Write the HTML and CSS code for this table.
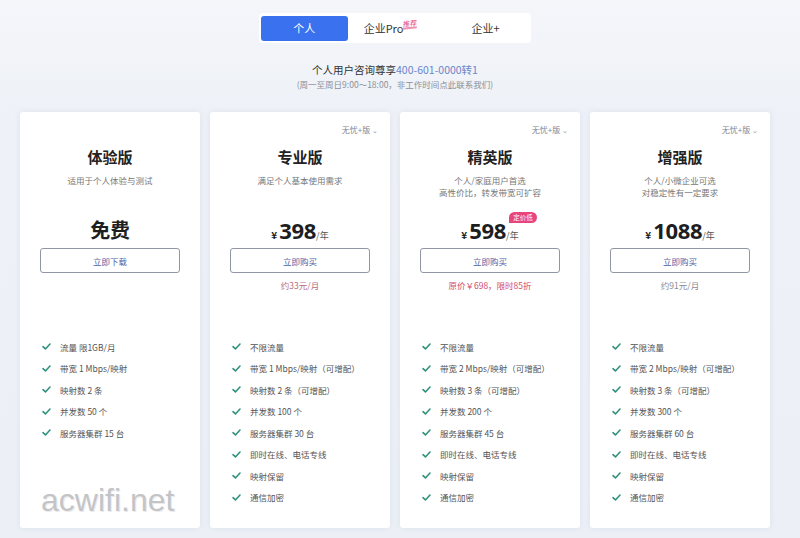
FILE: index.html
```html
<!DOCTYPE html>
<html lang="zh-CN">
<head>
<meta charset="utf-8">
<title>价格</title>
<link rel="stylesheet" href="styles.css">
</head>
<body>
<div class="page">
  <header class="head">
    <nav class="tabs">
      <span class="tab active">个人</span>
      <span class="tab pro">企业Pro<span class="hot">推荐</span></span>
      <span class="tab">企业+</span>
    </nav>
    <p class="consult">个人用户咨询尊享<span class="phone">400-601-0000转1</span></p>
    <p class="hours">(周一至周日9:00～18:00，非工作时间点此联系我们)</p>
  </header>

  <main class="cards">
    <section class="card">
      <div class="card-top"></div>
      <h2 class="title">体验版</h2>
      <div class="desc">适用于个人体验与测试</div>
      <div class="price-row"><span class="price free">免费</span></div>
      <button class="btn">立即下载</button>
      <div class="note">&nbsp;</div>
      <ul class="feats">
        <li><svg class="chk" viewBox="0 0 10 8"><path d="M1 4.2 L3.8 6.8 L9 1.2"/></svg>流量 限1GB/月</li>
        <li><svg class="chk" viewBox="0 0 10 8"><path d="M1 4.2 L3.8 6.8 L9 1.2"/></svg>带宽 1 Mbps/映射</li>
        <li><svg class="chk" viewBox="0 0 10 8"><path d="M1 4.2 L3.8 6.8 L9 1.2"/></svg>映射数 2 条</li>
        <li><svg class="chk" viewBox="0 0 10 8"><path d="M1 4.2 L3.8 6.8 L9 1.2"/></svg>并发数 50 个</li>
        <li><svg class="chk" viewBox="0 0 10 8"><path d="M1 4.2 L3.8 6.8 L9 1.2"/></svg>服务器集群 15 台</li>
      </ul>
    </section>

    <section class="card">
      <div class="card-top"><span class="ver">无忧+版 <i class="caret">⌄</i></span></div>
      <h2 class="title">专业版</h2>
      <div class="desc">满足个人基本使用需求</div>
      <div class="price-row"><span class="cur">¥</span><span class="price">398</span><span class="unit">/年</span></div>
      <button class="btn">立即购买</button>
      <div class="note pink">约33元/月</div>
      <ul class="feats">
        <li><svg class="chk" viewBox="0 0 10 8"><path d="M1 4.2 L3.8 6.8 L9 1.2"/></svg>不限流量</li>
        <li><svg class="chk" viewBox="0 0 10 8"><path d="M1 4.2 L3.8 6.8 L9 1.2"/></svg>带宽 1 Mbps/映射（可增配）</li>
        <li><svg class="chk" viewBox="0 0 10 8"><path d="M1 4.2 L3.8 6.8 L9 1.2"/></svg>映射数 2 条（可增配）</li>
        <li><svg class="chk" viewBox="0 0 10 8"><path d="M1 4.2 L3.8 6.8 L9 1.2"/></svg>并发数 100 个</li>
        <li><svg class="chk" viewBox="0 0 10 8"><path d="M1 4.2 L3.8 6.8 L9 1.2"/></svg>服务器集群 30 台</li>
        <li><svg class="chk" viewBox="0 0 10 8"><path d="M1 4.2 L3.8 6.8 L9 1.2"/></svg>即时在线、电话专线</li>
        <li><svg class="chk" viewBox="0 0 10 8"><path d="M1 4.2 L3.8 6.8 L9 1.2"/></svg>映射保留</li>
        <li><svg class="chk" viewBox="0 0 10 8"><path d="M1 4.2 L3.8 6.8 L9 1.2"/></svg>通信加密</li>
      </ul>
    </section>

    <section class="card">
      <div class="card-top"><span class="ver">无忧+版 <i class="caret">⌄</i></span></div>
      <h2 class="title">精英版</h2>
      <div class="desc">个人/家庭用户首选<br>高性价比，转发带宽可扩容</div>
      <div class="price-row"><span class="cur">¥</span><span class="price">598</span><span class="unit">/年</span><span class="tag">定价低</span></div>
      <button class="btn">立即购买</button>
      <div class="note red">原价￥698，限时85折</div>
      <ul class="feats">
        <li><svg class="chk" viewBox="0 0 10 8"><path d="M1 4.2 L3.8 6.8 L9 1.2"/></svg>不限流量</li>
        <li><svg class="chk" viewBox="0 0 10 8"><path d="M1 4.2 L3.8 6.8 L9 1.2"/></svg>带宽 2 Mbps/映射（可增配）</li>
        <li><svg class="chk" viewBox="0 0 10 8"><path d="M1 4.2 L3.8 6.8 L9 1.2"/></svg>映射数 3 条（可增配）</li>
        <li><svg class="chk" viewBox="0 0 10 8"><path d="M1 4.2 L3.8 6.8 L9 1.2"/></svg>并发数 200 个</li>
        <li><svg class="chk" viewBox="0 0 10 8"><path d="M1 4.2 L3.8 6.8 L9 1.2"/></svg>服务器集群 45 台</li>
        <li><svg class="chk" viewBox="0 0 10 8"><path d="M1 4.2 L3.8 6.8 L9 1.2"/></svg>即时在线、电话专线</li>
        <li><svg class="chk" viewBox="0 0 10 8"><path d="M1 4.2 L3.8 6.8 L9 1.2"/></svg>映射保留</li>
        <li><svg class="chk" viewBox="0 0 10 8"><path d="M1 4.2 L3.8 6.8 L9 1.2"/></svg>通信加密</li>
      </ul>
    </section>

    <section class="card">
      <div class="card-top"><span class="ver">无忧+版 <i class="caret">⌄</i></span></div>
      <h2 class="title">增强版</h2>
      <div class="desc">个人/小微企业可选<br>对稳定性有一定要求</div>
      <div class="price-row"><span class="cur">¥</span><span class="price">1088</span><span class="unit">/年</span></div>
      <button class="btn">立即购买</button>
      <div class="note grey">约91元/月</div>
      <ul class="feats">
        <li><svg class="chk" viewBox="0 0 10 8"><path d="M1 4.2 L3.8 6.8 L9 1.2"/></svg>不限流量</li>
        <li><svg class="chk" viewBox="0 0 10 8"><path d="M1 4.2 L3.8 6.8 L9 1.2"/></svg>带宽 2 Mbps/映射（可增配）</li>
        <li><svg class="chk" viewBox="0 0 10 8"><path d="M1 4.2 L3.8 6.8 L9 1.2"/></svg>映射数 3 条（可增配）</li>
        <li><svg class="chk" viewBox="0 0 10 8"><path d="M1 4.2 L3.8 6.8 L9 1.2"/></svg>并发数 300 个</li>
        <li><svg class="chk" viewBox="0 0 10 8"><path d="M1 4.2 L3.8 6.8 L9 1.2"/></svg>服务器集群 60 台</li>
        <li><svg class="chk" viewBox="0 0 10 8"><path d="M1 4.2 L3.8 6.8 L9 1.2"/></svg>即时在线、电话专线</li>
        <li><svg class="chk" viewBox="0 0 10 8"><path d="M1 4.2 L3.8 6.8 L9 1.2"/></svg>映射保留</li>
        <li><svg class="chk" viewBox="0 0 10 8"><path d="M1 4.2 L3.8 6.8 L9 1.2"/></svg>通信加密</li>
      </ul>
    </section>
  </main>
  <div class="watermark">acwifi.net</div>
</div>
</body>
</html>
```

FILE: styles.css
```css
* { box-sizing: border-box; }
html, body { margin: 0; padding: 0; }
body {
  width: 800px;
  height: 538px;
  overflow: hidden;
  background: linear-gradient(180deg, #f4f6fa 0px, #eef1f7 120px, #ecf0f6 100%);
  font-family: "Noto Sans CJK SC", "Noto Sans", sans-serif;
  color: #333;
}
.page { position: relative; width: 800px; height: 538px; }

.head {
  width: 750px;
  margin-left: 20px;
  padding-top: 13px;
  display: flex;
  flex-direction: column;
  align-items: center;
}
.tabs {
  width: 272px;
  height: 30px;
  background: #fff;
  border-radius: 4px;
  padding: 3px 2px;
  display: flex;
  align-items: center;
}
.tab {
  position: relative;
  width: 87px;
  height: 25px;
  display: flex;
  align-items: center;
  justify-content: center;
  font-size: 11px;
  color: #333;
}
.tab.pro {
  width: 95px;
  justify-content: flex-start;
  padding-left: 16px;
}
.tab.active {
  background: #3a71ef;
  color: #fff;
  border-radius: 3px;
}
.hot {
  position: absolute;
  left: 55px;
  top: 3px;
  font-size: 7px;
  line-height: 8px;
  color: #e0457b;
  border-bottom: 2px solid #ef8db0;
  transform: skewX(-10deg) rotate(-6deg);
}
.consult {
  margin: 20px 0 0;
  font-size: 10.5px;
  line-height: 14px;
  color: #333;
}
.phone { color: #6a85c9; }
.hours {
  margin: 1px 0 0;
  font-size: 8.5px;
  line-height: 12px;
  color: #8a8f99;
}

.cards {
  width: 750px;
  margin: 22px 0 0 20px;
  display: flex;
  gap: 10px;
}
.card {
  width: 180px;
  height: 416px;
  background: #fff;
  border-radius: 3px;
  box-shadow: 0 0 6px rgba(150, 165, 200, 0.18);
  display: flex;
  flex-direction: column;
  align-items: center;
}
.card-top {
  align-self: stretch;
  height: 36px;
  padding: 13px 12px 0 0;
  display: flex;
  justify-content: flex-end;
  align-items: flex-start;
}
.ver {
  font-size: 8px;
  line-height: 10px;
  color: #7f8594;
}
.caret { font-style: normal; font-size: 7px; color: #999; }
.title {
  margin: 0;
  font-size: 15px;
  line-height: 18px;
  font-weight: 700;
  color: #222;
}
.desc {
  margin-top: 8px;
  height: 24px;
  font-size: 8.5px;
  line-height: 12px;
  color: #777;
  text-align: center;
}
.price-row {
  position: relative;
  margin-top: 18px;
  height: 28px;
  display: flex;
  align-items: baseline;
  justify-content: center;
  line-height: 28px;
}
.cur { font-size: 10px; color: #222; margin-right: 2px; font-weight: 700; }
.price {
  font-family: "Open Sans", "Noto Sans", sans-serif;
  font-size: 22px;
  font-weight: 700;
  color: #1e1e1e;
  letter-spacing: -0.3px;
}
.price.free {
  font-family: "Noto Sans CJK SC", sans-serif;
  font-size: 20px;
}
.unit { font-size: 9px; color: #555; }
.tag {
  position: absolute;
  right: -18px;
  top: -4px;
  height: 11px;
  padding: 0 4px;
  border-radius: 6px 6px 6px 0;
  background: #e8457d;
  color: #fff;
  font-size: 6.5px;
  line-height: 11px;
}
.btn {
  margin-top: 4px;
  width: 140px;
  height: 25px;
  border: 1px solid #9096a3;
  border-radius: 3px;
  background: #fff;
  font-family: "Noto Sans CJK SC", sans-serif;
  font-size: 8.5px;
  color: #4f5fa6;
  padding: 0;
}
.note {
  margin-top: 6px;
  height: 12px;
  font-size: 8.5px;
  line-height: 12px;
}
.note.pink { color: #b86c80; }
.note.red { color: #d24b70; }
.note.grey { color: #8a8a95; }
.feats {
  align-self: stretch;
  list-style: none;
  margin: 45px 0 0;
  padding: 0 0 0 22px;
}
.feats li {
  height: 21.5px;
  display: flex;
  align-items: center;
  font-size: 8.5px;
  color: #555;
}
.chk {
  width: 9px;
  height: 7px;
  margin-right: 9px;
  fill: none;
  stroke: #2e917a;
  stroke-width: 1.8;
  stroke-linecap: round;
  stroke-linejoin: round;
}
.watermark {
  position: absolute;
  left: 41px;
  top: 482px;
  font-family: "Liberation Sans", sans-serif;
  font-size: 32px;
  line-height: 36px;
  color: #c4c4c6;
  text-shadow: 0 0 2px #fff, 1px 1px 0 #e6e6e8;
}
```
